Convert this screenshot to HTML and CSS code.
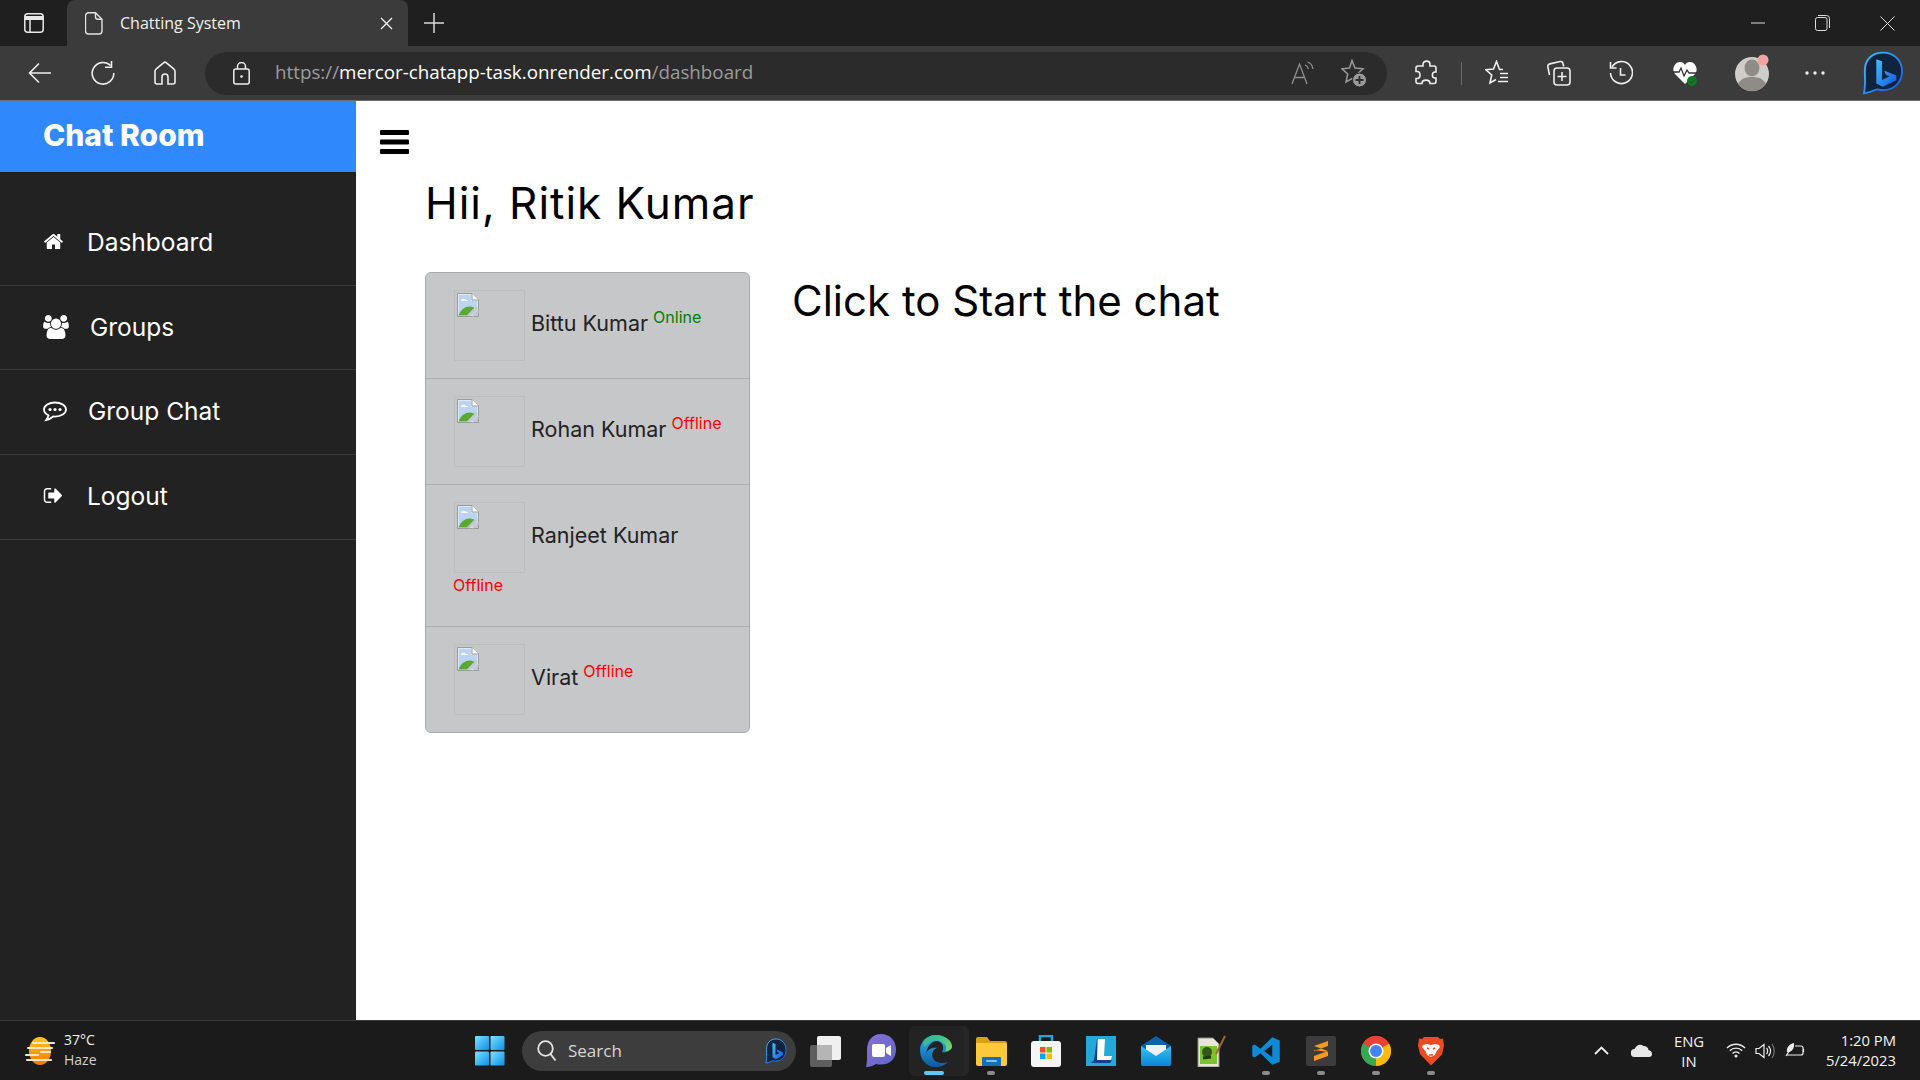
FILE: index.html
```html
<!DOCTYPE html>
<html lang="en">
<head>
<meta charset="utf-8">
<title>Chatting System</title>
<link rel="stylesheet" href="styles.css">
</head>
<body>
<svg class="defs" width="0" height="0" aria-hidden="true">
  <defs>
    <symbol id="broken" viewBox="0 0 22 24">
      <path d="M.5.5H15l6.500 6.500V23.500H.5z" fill="#dfe8f6" stroke="#9a9a9a"/>
      <path d="M2 2h12v6h6v14H2z" fill="#bcd4f4"/>
      <path d="M4 8c0-2 3-3 4-1.500 2-.5 3 1 3 1.500z" fill="#fff"/>
      <path d="M1.500 22.500c2-6 7-9 11-9 2 0 3.500.5 5 1.500l-7 7.500z" fill="#5ba833"/>
      <path d="M15 .5V7h6.500" fill="#fff" stroke="#9a9a9a"/>
      <path d="M15 23.500 21.500 16.500V23.500z" fill="#c6c7c9"/>
      <path d="M11 23 20 14" stroke="#c6c7c9" stroke-width="2.500"/>
      <path d="M.5 23.500H12M17 23.500h4.500V20" stroke="#9a9a9a" fill="none"/>
    </symbol>
    <linearGradient id="gWin" x1="0" y1="0" x2="1" y2="1"><stop offset="0" stop-color="#7be3ff"/><stop offset="1" stop-color="#0b8fea"/></linearGradient>
    <linearGradient id="gEdge" x1="0" y1="0" x2="0" y2="1"><stop offset="0" stop-color="#32b5e8"/><stop offset="1" stop-color="#0c59a4"/></linearGradient>
    <linearGradient id="gEdge2" x1="0" y1="0" x2="1" y2="1"><stop offset="0" stop-color="#1fb4a8"/><stop offset="1" stop-color="#7ed957"/></linearGradient>
    <linearGradient id="gBing" x1="0" y1="0" x2="1" y2="1"><stop offset="0" stop-color="#39c5ff"/><stop offset="1" stop-color="#1a55e0"/></linearGradient>
    <linearGradient id="gSun" x1="0" y1="0" x2="0" y2="1"><stop offset="0" stop-color="#ffc61a"/><stop offset="1" stop-color="#f07a06"/></linearGradient>
    <linearGradient id="gMeet" x1="0" y1="0" x2="1" y2="1"><stop offset="0" stop-color="#8b6fd6"/><stop offset="1" stop-color="#5d67c8"/></linearGradient>
    <linearGradient id="gMail" x1="0" y1="0" x2="0" y2="1"><stop offset="0" stop-color="#33c4f5"/><stop offset="1" stop-color="#0a85d9"/></linearGradient>
    <symbol id="bing" viewBox="0 0 44 54" preserveAspectRatio="none">
      <path d="M22 2C10 2 3 11 3 24c0 9 1 19-1 28 6-1 10-3 14-5 3 1 4 1 6 1 12 0 20-10 20-23S34 2 22 2z" fill="#10233f" stroke="url(#gBing)" stroke-width="2"/>
      <path d="M15 10l6 2.500v23l8-4.500-4-2-2-5 13 6v6l-14 8-7-4z" fill="url(#gBing)"/>
    </symbol>
  </defs>
</svg>

<div class="screen">
  <header class="tabstrip">
    <div class="tabstrip-left">
      <svg width="20" height="20" viewBox="0 0 20 20" fill="none" stroke="#e8e8e8" stroke-width="1.500"><rect x=".8" y=".8" width="18.400" height="18.400" rx="3"/><path d="M1 5h18" stroke-width="4"/><path d="M6 6v13"/></svg>
    </div>
    <div class="tab">
      <svg width="18" height="23" viewBox="0 0 18 23" fill="none" stroke="#e4e4e4" stroke-width="1.400"><path d="M3.500.8h7L17 7.300V19a3 3 0 0 1-3 3H3.500a3 3 0 0 1-3-3V3.800a3 3 0 0 1 3-3z"/><path d="M10.500.8v4a2.500 2.500 0 0 0 2.500 2.500h4"/></svg>
      <span class="tab-title">Chatting System</span>
      <svg width="13" height="13" viewBox="0 0 13 13" stroke="#eee" stroke-width="1.400"><path d="M1 1l11 11M12 1L1 12"/></svg>
    </div>
    <div class="newtab">
      <svg width="20" height="20" viewBox="0 0 20 20" stroke="#dcdcdc" stroke-width="1.500"><path d="M10 0v20M0 10h20"/></svg>
    </div>
    <div class="winctl">
      <div class="winbtn"><svg width="14" height="2" viewBox="0 0 14 2" stroke="#ddd"><path d="M0 1h14"/></svg></div>
      <div class="winbtn"><svg width="15" height="16" viewBox="0 0 15 16" fill="none" stroke="#ddd"><rect x=".5" y="2.500" width="11.500" height="13" rx="2"/><path d="M3 .5h8.500a3 3 0 0 1 3 3V13"/></svg></div>
      <div class="winbtn"><svg width="15" height="15" viewBox="0 0 15 15" stroke="#ddd"><path d="M.5.500l14 14M14.500.5l-14 14"/></svg></div>
    </div>
  </header>

  <nav class="toolbar">
    <div class="tool tool-nav">
      <svg width="24" height="22" viewBox="0 0 24 22" fill="none" stroke="#eee" stroke-width="1.600"><path d="M23 11H2M11 1.500 1.500 11l9.500 9.500"/></svg>
    </div>
    <div class="tool tool-nav">
      <svg width="24" height="24" viewBox="0 0 24 24" fill="none" stroke="#eee" stroke-width="1.600"><path d="M19.500 4.500A10.800 10.800 0 1 0 22.800 12"/><path d="M20.500 0v6.300H14"/></svg>
    </div>
    <div class="tool tool-nav">
      <svg width="22" height="24" viewBox="0 0 22 24" fill="none" stroke="#eee" stroke-width="1.600"><path d="M8 23H3a2 2 0 0 1-2-2V10.500c0-1 .4-1.700 1-2.300L9.500 1.800c.9-.8 2.100-.8 3 0L20 8.200c.6.600 1 1.300 1 2.300V21a2 2 0 0 1-2 2h-5v-7a3 3 0 0 0-6 0z"/></svg>
    </div>
    <div class="address">
      <svg class="lock" width="17" height="23" viewBox="0 0 17 23" fill="none" stroke="#eee" stroke-width="1.500"><rect x=".8" y="7" width="15.400" height="15" rx="2"/><path d="M4.500 7V4.500a4 4 0 0 1 8 0V7"/><circle cx="8.500" cy="14.500" r="1.300" fill="#eee" stroke="none"/></svg>
      <span class="url"><span class="url-dim">https://</span>mercor-chatapp-task.onrender.com<span class="url-dim">/dashboard</span></span>
      <div class="addr-icons">
        <svg width="24" height="24" viewBox="0 0 24 24" fill="none" stroke="#8f8f8f" stroke-width="1.300"><path d="M1 23 8.500 3 16 23M3.500 16.500h10"/><path d="M14 4c2 .7 3 2 3.300 4M16.500 1c3 1 5 3.500 5.500 7"/></svg>
        <svg width="26" height="29" viewBox="0 0 26 29" fill="none" stroke="#9a9a9a" stroke-width="1.500"><path d="M11 1.500 14 9l8 .8-5.700 5.200L18 23l-7-3.500L5 23l1.700-8L1 9.800 8.500 9z"/><circle cx="18.500" cy="21" r="7" fill="#9a9a9a" stroke="#2b2b2b" stroke-width="1"/><path d="M18.500 17v8M14.500 21h8" stroke="#2b2b2b" stroke-width="1.800"/></svg>
      </div>
    </div>
    <div class="tool">
      <svg width="22" height="26" viewBox="0 0 22 26" fill="none" stroke="#eee" stroke-width="1.600"><path d="M8 4.500c0-4.500 7-4.500 7 0V6h4a2 2 0 0 1 2 2v4h-1c-3.500 0-3.500 6 0 6h1v3.500a2 2 0 0 1-2 2h-4c0-4.500-8-4.500-8 0H3a2 2 0 0 1-2-2v-3h1c4 0 4-7 0-7H1V8a2 2 0 0 1 2-2h5z"/></svg>
    </div>
    <div class="tool-sep"></div>
    <div class="tool">
      <svg width="24" height="26" viewBox="0 0 24 26" fill="none" stroke="#eee" stroke-width="1.600"><path d="M18 9.500h-3.500L11.500 1.500 8.500 9 1 9.800 6.700 15 5 23l6-3.500"/><path d="M15 13.500h8M15 17.500h8M13 21.500h10" stroke-width="1.400"/></svg>
    </div>
    <div class="tool">
      <svg width="24" height="26" viewBox="0 0 24 26" fill="none" stroke="#eee" stroke-width="1.600"><path d="M2.500 15 .9 7c-.3-1.500.4-2.800 2-3.100L13 1.500c1.500-.3 2.700.4 3 2l.7 3"/><rect x="7" y="8" width="16" height="17" rx="3"/><path d="M15 12v9M10.500 16.500h9"/></svg>
    </div>
    <div class="tool">
      <svg width="24" height="26" viewBox="0 0 24 26" fill="none" stroke="#eee" stroke-width="1.600"><path d="M3 7a11 11 0 1 1-1.500 6"/><path d="M1.500 2v6h6"/><path d="M11.500 8v7h5"/></svg>
    </div>
    <div class="tool tool-heart">
      <svg width="26" height="26" viewBox="0 0 26 26"><path d="M13 24 3 14C-1 9 3 2 8 2c2.500 0 4 1 5 3 1-2 2.500-3 5-3 5 0 9 7 5 12z" fill="#fff"/><path d="M1 12h6l2-4 3 8 3-6 2 3h8" fill="none" stroke="#333" stroke-width="1.300"/><circle cx="20" cy="21" r="5" fill="#0f7b1f"/><path d="M17.500 21l2 2 3-3.500" fill="none" stroke="#3b3b3b" stroke-width="1"/></svg>
    </div>
    <div class="tool tool-avatar">
      <svg width="36" height="44" viewBox="0 0 36 44"><circle cx="17" cy="23" r="17" fill="#cfcdc9"/><path d="M3 33c3-6 8-7 14-7s11 1 14 7a17 17 0 0 1-28 0z" fill="#8f8c88"/><ellipse cx="17" cy="17" rx="7.500" ry="8.500" fill="#8f8c88"/><circle cx="28" cy="9" r="5.500" fill="#f4a3a3"/></svg>
    </div>
    <div class="tool">
      <svg width="20" height="4" viewBox="0 0 20 4" fill="#eee"><circle cx="2" cy="2" r="1.700"/><circle cx="10" cy="2" r="1.700"/><circle cx="18" cy="2" r="1.700"/></svg>
    </div>
    <div class="tool tool-bing">
      <svg width="42" height="44"><use href="#bing"/></svg>
    </div>
  </nav>

  <div class="page">
    <aside class="sidebar">
      <div class="brand">Chat Room</div>
      <ul class="menu">
        <li class="menu-item">
          <svg class="mi mi-home" width="21" height="21" viewBox="0 0 1792 1792" fill="#fff"><path d="M1472 992v480q0 26-19 45t-45 19h-384v-384h-256v384h-384q-26 0-45-19t-19-45v-480q0-1 .5-3t.5-3l575-474 575 474q1 2 1 6zm223-69l-62 74q-8 9-21 11h-3q-13 0-21-7l-692-577-692 577q-12 8-24 7-13-2-21-11l-62-74q-8-10-7-23.500t11-21.500l719-599q32-26 76-26t76 26l244 204v-195q0-14 9-23t23-9h192q14 0 23 9t9 23v408l219 182q10 8 11 21.500t-7 23.500z"/></svg>
          <span>Dashboard</span>
        </li>
        <li class="menu-item">
          <svg class="mi mi-users" width="26" height="24" viewBox="0 0 1920 1792" fill="#fff"><path d="M593 896q-162 5-265 128h-134q-82 0-138-40.500t-56-118.500q0-353 124-353 6 0 43.500 21t97.500 42.500 119 21.500q67 0 133-23-5 37-5 66 0 139 81 256zm1071 637q0 120-73 189.500t-194 69.500h-874q-121 0-194-69.500t-73-189.500q0-53 3.500-103.500t14-109 26.500-108.500 43-97.500 62-81 85.500-53.500 111.500-20q10 0 43 21.500t73 48 107 48 135 21.500 135-21.500 107-48 73-48 43-21.500q61 0 111.500 20t85.500 53.500 62 81 43 97.500 26.500 108.500 14 109 3.500 103.500zm-1024-1277q0 106-75 181t-181 75-181-75-75-181 75-181 181-75 181 75 75 181zm704 384q0 159-112.500 271.500t-271.500 112.500-271.500-112.500-112.500-271.500 112.500-271.500 271.500-112.500 271.500 112.500 112.500 271.500zm576 225q0 78-56 118.500t-138 40.500h-134q-103-123-265-128 81-117 81-256 0-29-5-66 66 23 133 23 59 0 119-21.500t97.500-42.500 43.500-21q124 0 124 353zm-128-609q0 106-75 181t-181 75-181-75-75-181 75-181 181-75 181 75 75 181z"/></svg>
          <span>Groups</span>
        </li>
        <li class="menu-item">
          <svg class="mi mi-chat" width="24" height="21" viewBox="0 0 24 21" fill="none" stroke="#fff" stroke-width="1.800"><path d="M12 1.500C6 1.500 1 4.500 1 8.500c0 2.500 1.800 4.600 4.500 5.800-.3 1.700-1 3-2.300 4.700 3-.5 5.300-2 7-3.500.6.100 1.200.1 1.800.1 6 0 11-3 11-7.100s-5-7-11-7z"/><circle cx="7" cy="8.500" r="1.600" fill="#fff" stroke="none"/><circle cx="12" cy="8.500" r="1.600" fill="#fff" stroke="none"/><circle cx="17" cy="8.500" r="1.600" fill="#fff" stroke="none"/></svg>
          <span>Group Chat</span>
        </li>
        <li class="menu-item">
          <svg class="mi mi-logout" width="21" height="21" viewBox="0 0 1792 1792" fill="#fff"><path d="M704 1440q0 4 1 20t.5 26.500-3 23.500-10 19.500-20.500 6.500h-320q-119 0-203.500-84.500t-84.500-203.500v-704q0-119 84.500-203.500t203.500-84.500h320q13 0 22.500 9.500t9.500 22.500q0 4 1 20t.5 26.500-3 23.500-10 19.500-20.500 6.500h-320q-66 0-113 47t-47 113v704q0 66 47 113t113 47h312l11.500 1 11.500 3 8 5.500 7 9 2 13.500zm928-544q0 26-19 45l-544 544q-19 19-45 19t-45-19-19-45v-288h-448q-26 0-45-19t-19-45v-384q0-26 19-45t45-19h448v-288q0-26 19-45t45-19 45 19l544 544q19 19 19 45z"/></svg>
          <span>Logout</span>
        </li>
      </ul>
    </aside>

    <main class="main">
      <svg class="hamburger" width="29" height="24" viewBox="0 0 29 24" fill="#000"><rect width="29" height="5" rx="1"/><rect y="9.500" width="29" height="5" rx="1"/><rect y="19" width="29" height="5" rx="1"/></svg>
      <h1 class="greeting">Hii, Ritik Kumar</h1>
      <div class="columns">
        <div class="users">
          <div class="user">
            <span class="avatar"><svg width="22" height="24"><use href="#broken"/></svg></span>
            <span class="name">Bittu Kumar</span>
            <span class="status online">Online</span>
          </div>
          <div class="user">
            <span class="avatar"><svg width="22" height="24"><use href="#broken"/></svg></span>
            <span class="name">Rohan Kumar</span>
            <span class="status offline">Offline</span>
          </div>
          <div class="user">
            <span class="avatar"><svg width="22" height="24"><use href="#broken"/></svg></span>
            <span class="name">Ranjeet Kumar</span>
            <span class="status offline">Offline</span>
          </div>
          <div class="user">
            <span class="avatar"><svg width="22" height="24"><use href="#broken"/></svg></span>
            <span class="name">Virat</span>
            <span class="status offline">Offline</span>
          </div>
        </div>
        <h2 class="prompt">Click to Start the chat</h2>
      </div>
    </main>
  </div>

  <footer class="taskbar">
    <div class="weather">
      <svg width="30" height="30" viewBox="0 0 30 30"><ellipse cx="15" cy="15" rx="11" ry="14" fill="url(#gSun)"/><path d="M8 7h21M3 12h24M1 19h12M16 16h9M2 24h24" stroke="#f3e6c4" stroke-width="2.200" stroke-linecap="round"/></svg>
      <div class="weather-text"><div>37°C</div><div class="weather-sub">Haze</div></div>
    </div>
    <div class="task-center">
      <svg class="winlogo" width="30" height="30" viewBox="0 0 30 30" fill="url(#gWin)"><rect width="14" height="14" rx="1"/><rect x="15.500" width="14" height="14" rx="1"/><rect y="15.500" width="14" height="14" rx="1"/><rect x="15.500" y="15.500" width="14" height="14" rx="1"/></svg>
      <div class="search">
        <svg width="20" height="22" viewBox="0 0 20 22" fill="none" stroke="#e5e5e5" stroke-width="1.800"><circle cx="8.500" cy="8.500" r="7.300"/><path d="M13.500 14l5 6.500"/></svg>
        <span class="search-label">Search</span>
        <svg class="search-bing" width="22" height="26"><use href="#bing"/></svg>
      </div>
      <div class="apps">
        <div class="app">
          <svg width="34" height="32" viewBox="0 0 34 32"><rect x="1" y="10" width="22" height="22" rx="2" fill="#5e5e5e"/><rect x="8" y="1" width="24" height="24" rx="2" fill="#f0f0f0"/><rect x="8" y="10" width="15" height="15" fill="#b5b5b5"/></svg>
        </div>
        <div class="app">
          <svg width="30" height="34" viewBox="0 0 30 34"><path d="M15 0C6 0 1 7 1 16c0 6 .5 12-1 17 4 0 7-1 10-3 2 .5 3 .5 5 .5 9 0 15-6 15-15S24 0 15 0z" fill="url(#gMeet)"/><rect x="6" y="10" width="13" height="13" rx="2" fill="#fff"/><path d="M20 14l5-3v11l-5-3z" fill="#fff"/></svg>
        </div>
        <div class="app app-active">
          <svg width="32" height="32" viewBox="0 0 32 32"><path d="M16 0C7 0 0 7 0 15c0 10 7 17 15 17 6 0 10-2 13-5-6 2-13 1-15-4-2-4 0-9 4-10-5-1-10 2-11 6C8 6 18 3 22 9c2 3 1 6 0 8 4 1 9-1 10-5C32 5 24 0 16 0z" fill="url(#gEdge)"/><path d="M5 12C9 4 20 3 25 9c2 3 1 6 0 7 3 0 7-1 7-5C31 4 23 0 16 0 11 0 7 2 4 5c-1 2 0 5 1 7z" fill="url(#gEdge2)"/></svg>
          <span class="app-bar"></span>
        </div>
        <div class="app app-dot">
          <svg width="31" height="30" viewBox="0 0 31 30"><path d="M0 3a2 2 0 0 1 2-2h9l3 4h15a2 2 0 0 1 2 2v6H0z" fill="#dc9f18"/><path d="M0 7h29a2 2 0 0 1 2 2v19a2 2 0 0 1-2 2H2a2 2 0 0 1-2-2z" fill="#fcc93a"/><path d="M7 21h17a1 1 0 0 1 1 1v8H6v-8a1 1 0 0 1 1-1z" fill="#1570b8"/><rect x="10" y="24" width="11" height="2" rx="1" fill="#7fc4ef"/></svg>
        </div>
        <div class="app">
          <svg width="30" height="32" viewBox="0 0 30 32"><path d="M9 7V1h12v6" fill="none" stroke="#1fa8e0" stroke-width="2.500"/><path d="M0 9a3 3 0 0 1 3-3h24a3 3 0 0 1 3 3v20a3 3 0 0 1-3 3H3a3 3 0 0 1-3-3z" fill="#f5f5f5"/><rect x="9" y="12" width="5.500" height="5.500" fill="#f25022"/><rect x="15.500" y="12" width="5.500" height="5.500" fill="#7fba00"/><rect x="9" y="18.500" width="5.500" height="5.500" fill="#00a4ef"/><rect x="15.500" y="18.500" width="5.500" height="5.500" fill="#ffb900"/></svg>
        </div>
        <div class="app">
          <svg width="30" height="30" viewBox="0 0 30 30"><rect width="30" height="30" fill="#23a8d8"/><path d="M11 3 8 24 5 27h19l2-3H11z" fill="#123f8f"/><path d="M12 3h7l-1 17h8l-1 4H11z" fill="#fff"/></svg>
        </div>
        <div class="app">
          <svg width="30" height="30" viewBox="0 0 30 30"><path d="M15 0 30 10v18a2 2 0 0 1-2 2H2a2 2 0 0 1-2-2V10z" fill="#0a62ad"/><path d="M5 9h20v9l-10 5-10-5z" fill="#f0f0f0"/><path d="M0 10l15 10 15-10v18a2 2 0 0 1-2 2H2a2 2 0 0 1-2-2z" fill="url(#gMail)"/></svg>
        </div>
        <div class="app">
          <svg width="30" height="32" viewBox="0 0 30 32"><path d="M2 3h15l6 6v23H2z" fill="#e6e6da" stroke="#8d8d80"/><rect x="4" y="11" width="17" height="18" fill="#7cc22c"/><circle cx="11" cy="17" r="5" fill="#33581b"/><path d="M7 23l8-1" stroke="#20380e" stroke-width="3"/><path d="M20 19 29 1" stroke="#9c6a2d" stroke-width="2"/></svg>
        </div>
        <div class="app app-dot">
          <svg width="30" height="30" viewBox="0 0 24 24"><path d="M17 1 7.500 10.200 3 6.800 1 7.800v8.400l2 1 4.500-3.400L17 23l6-2.500v-17zm0 6v10l-6.500-5z" fill="#0e8ad6"/></svg>
        </div>
        <div class="app app-dot">
          <svg width="30" height="30" viewBox="0 0 30 30"><rect width="30" height="30" rx="2" fill="#3c3c3c"/><path d="M22 5v5L8 15v-5zM22 15v5L8 25v-5zM8 14l14 2v-1L8 10z" fill="#f89820"/></svg>
        </div>
        <div class="app app-dot">
          <svg width="30" height="30" viewBox="0 0 30 30"><circle cx="15" cy="15" r="15" fill="#ea4335"/><path d="M15 15 2 7.500A15 15 0 0 0 15 30z" fill="#34a853"/><path d="M15 15V30A15 15 0 0 0 28 7.500z" fill="#fbbc05"/><path d="M15 15 2 7.500A15 15 0 0 1 15 0a15 15 0 0 1 13 7.500z" fill="#ea4335"/><circle cx="15" cy="15" r="7.500" fill="#fff"/><circle cx="15" cy="15" r="6" fill="#4285f4"/></svg>
        </div>
        <div class="app app-dot">
          <svg width="26" height="30" viewBox="0 0 26 30"><path d="M6 1h14l2 2 3-.5 1 7-2 9-11 11L2 18 0 9.500l1-7L4 3z" fill="#f04a23"/><path d="M5 9l4-1 4 1 4-1 4 1 1 2-4 5-1 3-4 2-4-2-1-3-4-5z" fill="#fff"/><path d="M9 12l2 1M17 12l-2 1M11 19h4" stroke="#f04a23" stroke-width="1.500"/></svg>
        </div>
      </div>
    </div>
    <div class="tray">
      <svg class="tray-chev" width="15" height="9" viewBox="0 0 15 9" fill="none" stroke="#eee" stroke-width="1.800"><path d="M1 8l6.500-6.500L14 8"/></svg>
      <svg class="tray-cloud" width="21" height="13" viewBox="0 0 21 13"><path d="M4 13a4 4 0 0 1-.5-8C5 1.500 9-1 12.500 2c3 0 5 2 5 4 2 .3 3.500 2 3.500 4a3 3 0 0 1-3 3z" fill="#e8e8e8"/></svg>
      <div class="lang"><div>ENG</div><div>IN</div></div>
      <svg class="tray-wifi" width="20" height="15" viewBox="0 0 20 15" fill="none" stroke="#eee" stroke-width="1.300"><path d="M1 5c5-5 13-5 18 0M3.800 7.800c3.500-3.500 9-3.500 12.400 0M6.500 10.500c2-2 5-2 7 0"/><circle cx="10" cy="13" r="1.500" fill="#eee" stroke="none"/></svg>
      <svg class="tray-sound" width="20" height="16" viewBox="0 0 20 16" fill="none" stroke="#eee" stroke-width="1.200"><path d="M1 5.500h3L9 1.500v13l-5-4H1z"/><path d="M11.500 5c1.500 1.500 1.500 4.500 0 6M13.500 3c2.500 3 2.500 7 0 10"/><path d="M17 1c3 4 3 10 0 14" stroke="#777"/></svg>
      <svg class="tray-batt" width="20" height="17" viewBox="0 0 20 17" fill="none" stroke="#eee" stroke-width="1.200"><path d="M10 4h6a2 2 0 0 1 2 2v5a2 2 0 0 1-2 2H2M18.500 7v3"/><path d="M2 10C1 6 4 2 9 1c.5 4-1 8-5 9z" fill="#eee" stroke="none"/><path d="M1 14 6 6"/></svg>
      <div class="clock"><div>1:20 PM</div><div>5/24/2023</div></div>
    </div>
  </footer>
</div>
</body>
</html>
```
FILE: styles.css
```css
* { box-sizing: border-box; }
html, body { margin: 0; padding: 0; height: 100%; }
body { background: #fff; font-family: "Inter", "Noto Sans", sans-serif; overflow: hidden; }
.defs { display: block; height: 0; }
svg { display: block; flex: none; }

.screen { width: 1920px; height: 1080px; display: flex; flex-direction: column; }

/* browser chrome */
.tabstrip { height: 46px; background: #1f1f1f; display: flex; align-items: flex-end; flex: none; }
.tabstrip-left { width: 67px; height: 46px; display: flex; align-items: center; padding-left: 24px; }
.tab { width: 341px; height: 46px; background: #3b3b3b; border-radius: 8px 8px 0 0; display: flex; align-items: center; padding-left: 18px; padding-right: 15px; font-family: "Open Sans", sans-serif; font-size: 16px; color: #f0f0f0; }
.tab-title { margin-left: 17px; flex: 1; }
.newtab { width: 52px; height: 46px; display: flex; align-items: center; justify-content: center; }
.winctl { margin-left: auto; display: flex; height: 46px; align-items: center; }
.winbtn { width: 65px; height: 46px; display: flex; align-items: center; justify-content: center; }

.toolbar { height: 55px; background: #3b3b3b; border-bottom: 1px solid #6e6e6e; display: flex; align-items: center; padding-left: 9px; flex: none; }
.tool { width: 62px; height: 50px; display: flex; align-items: center; justify-content: center; flex: none; }
.tool-nav { width: 62.500px; }
.tool-heart { padding-left: 3px; }
.tool-avatar { width: 70px; padding-left: 7px; }
.tool-bing { width: 74px; }
.tool-sep { width: 1px; height: 23px; background: #6a6a6a; margin: 0 4px; flex: none; }
.address { width: 1182px; height: 43px; margin-left: 8.500px; margin-right: 8px; background: #2b2b2b; border-radius: 22px; display: flex; align-items: center; padding-left: 28px; flex: none; }
.url { margin-left: 25px; font-family: "Open Sans", sans-serif; font-size: 18.800px; line-height: 24px; padding-bottom: 2px; color: #fff; white-space: nowrap; }
.url-dim { color: #9c9c9c; }
.addr-icons { margin-left: auto; display: flex; align-items: center; gap: 26px; padding-right: 20px; }

/* page */
.page { flex: 1; min-height: 0; display: flex; }
.sidebar { width: 356px; background: #222; color: #fff; flex: none; }
.brand { height: 71px; background: #3088fd; padding-left: 43px; font-size: 30px; font-weight: 800; line-height: 69px; }
.menu { list-style: none; margin: 0; padding: 29px 0 0; }
.menu-item { height: 84.700px; border-bottom: 1px solid #3a3a3a; display: flex; align-items: center; padding-left: 43px; padding-bottom: 2px; font-size: 24.500px; }
.mi-home { margin-right: 23px; }
.mi-users { margin-right: 21px; }
.mi-chat { margin-right: 21px; }
.mi-logout { margin-right: 23px; }

.main { flex: 1; min-width: 0; padding: 29px 0 0 24px; }
.greeting { margin: 19px 0 0 45px; font-size: 44px; font-weight: 400; letter-spacing: 1px; line-height: 60px; color: #000; }
.columns { display: flex; margin: 39px 0 0 45px; gap: 42px; align-items: flex-start; }
.users { width: 325px; background: #c6c7c9; border: 1px solid #a9aaac; border-radius: 6px; flex: none; }
.user { padding: 17px 24px 17px 28px; border-bottom: 1px solid #aeafb1; font-size: 21.500px; line-height: 36px; color: #222; }
.user:last-child { border-bottom: 0; }
.avatar { display: inline-block; width: 71px; height: 71px; border: 1px solid #bdbec0; padding: 2px; vertical-align: middle; }
.status { font-size: 16px; line-height: 1; vertical-align: 8px; margin-left: -1px; }
.online { color: #008000; }
.offline { color: #f00; }
.prompt { margin: 0; font-size: 42px; font-weight: 400; line-height: 58px; color: #000; }

/* taskbar */
.taskbar { height: 60px; background: #1b1b1b; border-top: 1px solid #3a3a3a; display: flex; align-items: center; flex: none; color: #f2f2f2; font-family: "Open Sans", sans-serif; font-size: 14px; }
.weather { width: 475px; display: flex; align-items: center; padding-left: 25px; gap: 9px; line-height: 20px; flex: none; }
.weather-text { padding-bottom: 2px; }
.weather-sub { color: #d0d0d0; }
.task-center { display: flex; align-items: center; flex: none; }
.search { width: 274px; height: 40px; margin-left: 17px; background: #3d3d3d; border-radius: 20px; display: flex; align-items: center; padding-left: 15px; padding-right: 9px; font-size: 17px; color: #d6d6d6; }
.search-label { margin-left: 11px; }
.search-bing { margin-left: auto; }
.apps { display: flex; margin-left: 2.500px; height: 60px; }
.app { width: 55px; height: 60px; display: flex; align-items: center; justify-content: center; position: relative; }
.app-active { background: #232323; border-radius: 6px; height: 50px; margin-top: 5px; box-shadow: 5px 0 0 #262626; }
.app-bar { position: absolute; left: 15px; bottom: 1px; width: 20px; height: 4px; border-radius: 2px; background: #5cc8f5; }
.app-dot::after { content: ""; position: absolute; left: 23.500px; bottom: 6px; width: 8px; height: 4px; border-radius: 2px; background: #8b8b8b; }
.tray { margin-left: auto; display: flex; align-items: center; padding-right: 24px; font-size: 14.800px; line-height: 20px; }
.tray-chev { margin-right: 22.500px; }
.tray-cloud { margin-right: 19px; }
.lang { text-align: center; width: 36px; margin-right: 19px; }
.tray-wifi { margin-right: 8.500px; }
.tray-sound { margin-right: 10px; }
.tray-batt { margin-right: 15.500px; }
.clock { text-align: right; width: 76px; padding-bottom: 2px; white-space: nowrap; }
```
